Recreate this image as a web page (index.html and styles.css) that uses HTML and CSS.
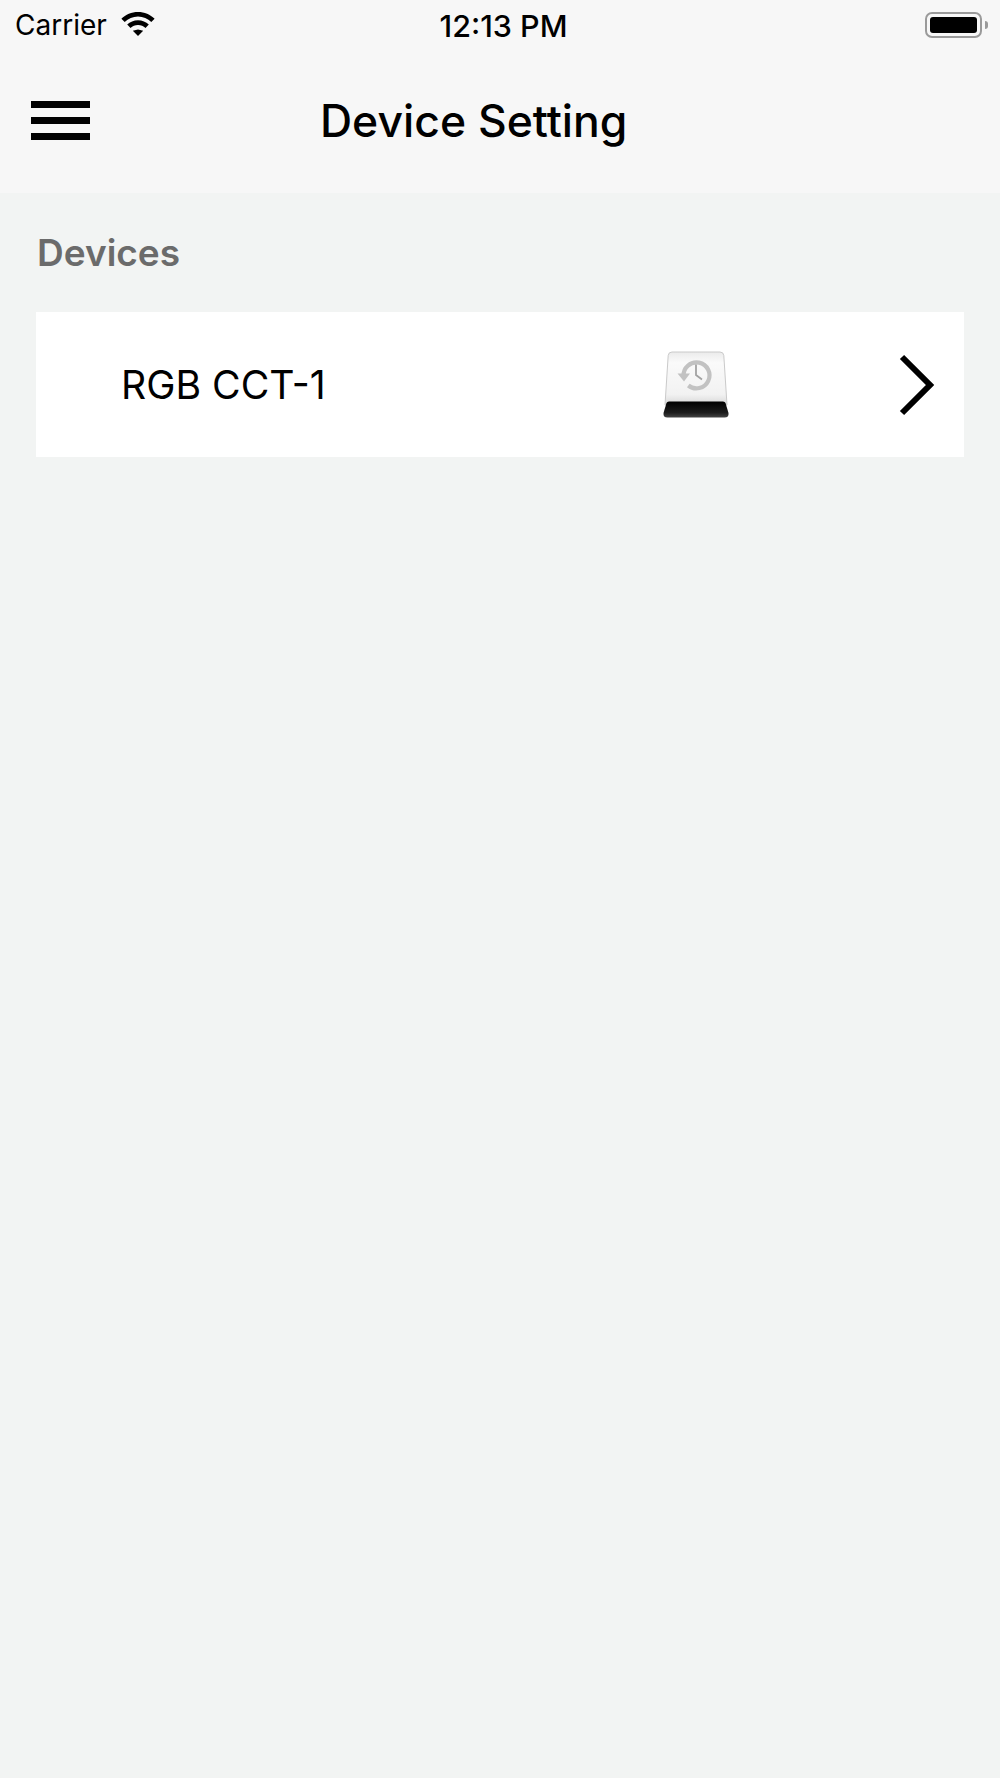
FILE: index.html
```html
<!DOCTYPE html>
<html>
<head>
  <meta charset="utf-8">
  <link rel="stylesheet" href="styles.css">
</head>
<body>
  <header class="top">
    <div class="status-bar">
      <div class="status-left">
        <span class="carrier">Carrier</span>
        <svg class="wifi" width="34" height="24" viewBox="0 0 34 24">
          <path d="M17 17.5l-5.2 1.2L17 24l5.2-5.3z M17 0C10.500 0 4.700 2.500 0.400 6.700l3.300 3.400C7.200 6.700 11.900 4.600 17 4.600s9.800 2.100 13.300 5.500l3.300-3.400C29.300 2.500 23.500 0 17 0z M17 8.300c-4.200 0-8 1.600-10.800 4.300l3.300 3.300c2-1.800 4.600-3 7.500-3s5.500 1.200 7.500 3l3.300-3.300C25 9.900 21.200 8.300 17 8.300z" fill="#000"/>
        </svg>
      </div>
      <span class="clock">12:13 PM</span>
      <div class="battery">
        <div class="battery-body"><div class="battery-fill"></div></div>
        <div class="battery-cap"></div>
      </div>
    </div>
    <div class="nav-bar">
      <div class="menu-icon">
        <span></span>
        <span></span>
        <span></span>
      </div>
      <h1>Device Setting</h1>
    </div>
  </header>

  <main class="content">
    <h2>Devices</h2>
    <div class="device-row">
      <span class="device-name">RGB CCT-1</span>
      <svg class="disk" width="66" height="68" viewBox="0 0 66 68">
        <defs>
          <linearGradient id="disk-body" x1="0" y1="0" x2="0" y2="1">
            <stop offset="0" stop-color="#ebebeb"/>
            <stop offset="0.2" stop-color="#fafafa"/>
            <stop offset="0.8" stop-color="#f2f2f2"/>
            <stop offset="1" stop-color="#d6d6d6"/>
          </linearGradient>
          <linearGradient id="disk-base" x1="0" y1="0" x2="0" y2="1">
            <stop offset="0" stop-color="#000"/>
            <stop offset="0.7" stop-color="#1c1c1c"/>
            <stop offset="1" stop-color="#444"/>
          </linearGradient>
        </defs>
        <path d="M9 1h48q3.500 0 3.800 3.500L64 54H2L5.200 4.500Q5.500 1 9 1z" fill="url(#disk-body)" stroke="#cacaca" stroke-width="1"/>
        <path d="M3.500 52q0.500-1.500 2.500-1.500h54q2 0 2.500 1.500L65.500 62q0.500 4.500-4 4.500H4.500q-4.500 0-4-4.500z" fill="url(#disk-base)"/>
        <path d="M20.500 25a13 13 0 1 1 4.800 9.500" fill="none" stroke="#c2c2c2" stroke-width="4.200"/>
        <path d="M14.500 22.500l12.500 0-6 8z" fill="#c2c2c2"/>
        <path d="M33 13.500v10.500l6 4.500" fill="none" stroke="#a2a2a2" stroke-width="1.800"/>
      </svg>
      <svg class="chevron" width="36" height="62" viewBox="0 0 36 62">
        <path d="M3 3l28 28L3 59" fill="none" stroke="#000" stroke-width="6"/>
      </svg>
    </div>
  </main>
</body>
</html>
```

FILE: styles.css
```css
html, body {
  margin: 0;
  padding: 0;
}
body {
  width: 1000px;
  height: 1778px;
  background-color: #f2f4f3;
  font-family: Inter, "Noto Sans", sans-serif;
  color: #000;
  overflow: hidden;
}
.top {
  height: 193px;
  background-color: #f7f7f7;
}
.status-bar {
  height: 50px;
  display: grid;
  grid-template-columns: 1fr auto 1fr;
  align-items: center;
  padding: 0 12px 0 15px;
}
.status-left {
  display: flex;
  align-items: center;
  gap: 14px;
}
.carrier {
  font-size: 28px;
}
.clock {
  margin-left: 4px;
  font-size: 30.5px;
  font-weight: 500;
}
.wifi {
  display: block;
  margin-bottom: 2px;
}
.battery {
  justify-self: end;
  display: flex;
  align-items: center;
  gap: 3px;
}
.battery-body {
  width: 57px;
  height: 26px;
  box-sizing: border-box;
  padding: 3px;
  border: 2px solid #9a9a9a;
  border-radius: 7px;
}
.battery-fill {
  height: 100%;
  background-color: #000;
  border-radius: 3px;
}
.battery-cap {
  width: 3px;
  height: 8px;
  background-color: #9a9a9a;
  border-radius: 0 3px 3px 0;
}
.nav-bar {
  height: 143px;
  display: flex;
  align-items: center;
  padding-left: 31px;
  padding-bottom: 2px;
  box-sizing: border-box;
}
.menu-icon {
  width: 59px;
  display: flex;
  flex-direction: column;
  gap: 9px;
}
.menu-icon span {
  height: 7px;
  background-color: #000;
}
h1 {
  margin: 0 0 0 230px;
  font-size: 44.5px;
  font-weight: 500;
}
.content {
  padding: 0 36px;
}
h2 {
  margin: 0;
  padding: 37px 0 0 1px;
  height: 83px;
  box-sizing: border-box;
  font-size: 37px;
  line-height: 45px;
  font-weight: 600;
  color: #6b6b6b;
}
.device-row {
  margin-top: 36px;
  height: 145px;
  background-color: #fff;
  display: flex;
  align-items: center;
  padding-left: 85px;
  padding-right: 29px;
}
.device-name {
  font-size: 39.2px;
  flex: 1;
}
.disk {
  display: block;
  margin-right: 170px;
}
.chevron {
  display: block;
}
```
